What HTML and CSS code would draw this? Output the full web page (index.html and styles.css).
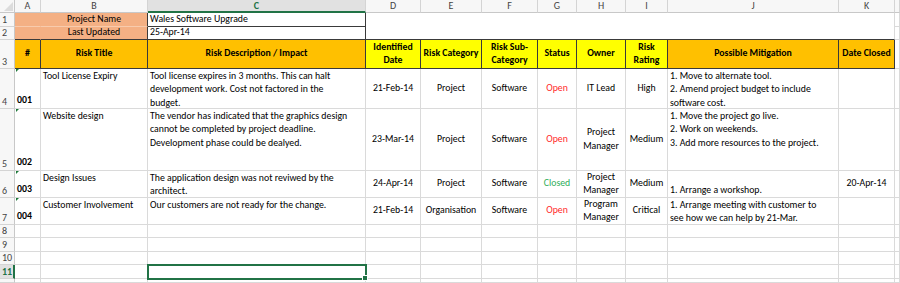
FILE: index.html
```html
<!DOCTYPE html>
<html>
<head>
<meta charset="utf-8">
<link rel="stylesheet" href="styles.css">
</head>
<body>
<div class="sheet">
  <!-- column headers -->
  <div class="corner"><span class="tri"></span></div>
  <div class="ch">A</div><div class="ch">B</div><div class="ch sel">C</div><div class="ch">D</div><div class="ch">E</div><div class="ch">F</div><div class="ch">G</div><div class="ch">H</div><div class="ch">I</div><div class="ch">J</div><div class="ch">K</div><div class="ch"></div>

  <!-- row 1 -->
  <div class="rh">1</div>
  <div class="c salmon sa"></div>
  <div class="c salmon sb mid ctr">Project Name</div>
  <div class="c boxc mid">Wales Software Upgrade</div>
  <div class="c merged"></div>
  <div class="c"></div>

  <!-- row 2 -->
  <div class="rh">2</div>
  <div class="c salmon sa s2"></div>
  <div class="c salmon sb s2 mid ctr">Last Updated</div>
  <div class="c boxc mid">25-Apr-14</div>
  <div class="c"></div>

  <!-- row 3 -->
  <div class="rh">3</div>
  <div class="c hd orange mid ctr">#</div>
  <div class="c hd orange mid ctr">Risk Title</div>
  <div class="c hd orange mid ctr">Risk Description / Impact</div>
  <div class="c hd yellow mid ctr">Identified<br>Date</div>
  <div class="c hd yellow mid ctr">Risk Category</div>
  <div class="c hd yellow mid ctr">Risk Sub-<br>Category</div>
  <div class="c hd yellow mid ctr">Status</div>
  <div class="c hd yellow mid ctr">Owner</div>
  <div class="c hd yellow mid ctr">Risk<br>Rating</div>
  <div class="c hd orange mid ctr">Possible Mitigation</div>
  <div class="c hd orange mid ctr">Date Closed</div>
  <div class="c"></div>

  <!-- row 4 -->
  <div class="rh">4</div>
  <div class="c id bot">001</div>
  <div class="c top">Tool License Expiry</div>
  <div class="c top">Tool license expires in 3 months. This can halt<br>development work. Cost not factored in the<br>budget.</div>
  <div class="c mid ctr">21-Feb-14</div>
  <div class="c mid ctr">Project</div>
  <div class="c mid ctr">Software</div>
  <div class="c mid ctr open">Open</div>
  <div class="c mid ctr">IT Lead</div>
  <div class="c mid ctr">High</div>
  <div class="c top">1. Move to alternate tool.<br>2. Amend project budget to include<br>software cost.</div>
  <div class="c"></div>
  <div class="c"></div>

  <!-- row 5 -->
  <div class="rh">5</div>
  <div class="c id bot">002</div>
  <div class="c top">Website design</div>
  <div class="c top">The vendor has indicated that the graphics design<br>cannot be completed by project deadline.<br>Development phase could be dealyed.</div>
  <div class="c mid ctr">23-Mar-14</div>
  <div class="c mid ctr">Project</div>
  <div class="c mid ctr">Software</div>
  <div class="c mid ctr open">Open</div>
  <div class="c mid ctr">Project<br>Manager</div>
  <div class="c mid ctr">Medium</div>
  <div class="c top">1. Move the project go live.<br>2. Work on weekends.<br>3. Add more resources to the project.</div>
  <div class="c"></div>
  <div class="c"></div>

  <!-- row 6 -->
  <div class="rh">6</div>
  <div class="c id bot">003</div>
  <div class="c top">Design Issues</div>
  <div class="c top">The application design was not reviwed by the<br>architect.</div>
  <div class="c mid ctr">24-Apr-14</div>
  <div class="c mid ctr">Project</div>
  <div class="c mid ctr">Software</div>
  <div class="c mid ctr closed">Closed</div>
  <div class="c mid ctr">Project<br>Manager</div>
  <div class="c mid ctr">Medium</div>
  <div class="c bot">1. Arrange a workshop.</div>
  <div class="c mid ctr">20-Apr-14</div>
  <div class="c"></div>

  <!-- row 7 -->
  <div class="rh">7</div>
  <div class="c id bot">004</div>
  <div class="c top">Customer Involvement</div>
  <div class="c top">Our customers are not ready for the change.</div>
  <div class="c mid ctr">21-Feb-14</div>
  <div class="c mid ctr">Organisation</div>
  <div class="c mid ctr">Software</div>
  <div class="c mid ctr open">Open</div>
  <div class="c mid ctr">Program<br>Manager</div>
  <div class="c mid ctr">Critical</div>
  <div class="c top">1. Arrange meeting with customer to<br>see how we can help by 21-Mar.</div>
  <div class="c"></div>
  <div class="c"></div>

  <!-- row 8 -->
  <div class="rh">8</div>
  <div class="c"></div><div class="c"></div><div class="c"></div><div class="c"></div><div class="c"></div><div class="c"></div><div class="c"></div><div class="c"></div><div class="c"></div><div class="c"></div><div class="c"></div><div class="c"></div>
  <!-- row 9 -->
  <div class="rh">9</div>
  <div class="c"></div><div class="c"></div><div class="c"></div><div class="c"></div><div class="c"></div><div class="c"></div><div class="c"></div><div class="c"></div><div class="c"></div><div class="c"></div><div class="c"></div><div class="c"></div>
  <!-- row 10 -->
  <div class="rh">10</div>
  <div class="c"></div><div class="c"></div><div class="c"></div><div class="c"></div><div class="c"></div><div class="c"></div><div class="c"></div><div class="c"></div><div class="c"></div><div class="c"></div><div class="c"></div><div class="c"></div>
  <!-- row 11 -->
  <div class="rh rsel">11</div>
  <div class="c"></div><div class="c"></div><div class="c active"></div><div class="c"></div><div class="c"></div><div class="c"></div><div class="c"></div><div class="c"></div><div class="c"></div><div class="c"></div><div class="c"></div><div class="c"></div>
  <!-- row 12 -->
  <div class="rh"></div>
  <div class="c"></div><div class="c"></div><div class="c"></div><div class="c"></div><div class="c"></div><div class="c"></div><div class="c"></div><div class="c"></div><div class="c"></div><div class="c"></div><div class="c"></div><div class="c"></div>
</div>
</body>
</html>
```

FILE: styles.css
```css
html, body {
  margin: 0;
  padding: 0;
  background: #ffffff;
}

.sheet {
  display: grid;
  grid-template-columns: 15px 26px 107px 218px 55px 61px 56px 39px 49px 42px 171px 56px 5px;
  grid-template-rows: 13px 14px 13px 29px 40px 62px 27px 27px 13px 14px 13px 14px 4px;
  width: 900px;
  height: 283px;
  overflow: hidden;
  font-family: "Carlito", "Lato", "Liberation Sans", sans-serif;
  font-size: 9.8px;
  color: #000;
  line-height: 13.4px;
}

.corner {
  position: relative;
  background: #f7f7f7;
  border-right: 1px solid #c8c8c8;
  border-bottom: 1px solid #c8c8c8;
  box-sizing: border-box;
}
.corner .tri {
  position: absolute;
  right: 1px;
  bottom: 1px;
  width: 0;
  height: 0;
  border-left: 9px solid transparent;
  border-bottom: 9px solid #dcdcdc;
}

.ch {
  background: #f7f7f7;
  color: #444;
  font-size: 10px;
  line-height: 12px;
  text-align: center;
  border-right: 1px solid #d4d4d4;
  border-bottom: 1px solid #c8c8c8;
  box-sizing: border-box;
}
.ch.sel {
  background: #e1e1e1;
  color: #217346;
  font-weight: bold;
  border-bottom: 2px solid #217346;
}

.rh {
  background: #f7f7f7;
  color: #444;
  font-size: 10px;
  line-height: 12px;
  display: flex;
  align-items: flex-end;
  justify-content: flex-start;
  padding-left: 2px;
  border-right: 1px solid #c8c8c8;
  border-bottom: 1px solid #d4d4d4;
  box-sizing: border-box;
}
.rh.rsel {
  background: #e1e1e1;
  color: #217346;
  font-weight: bold;
  border-right: 2px solid #217346;
}

.c {
  box-sizing: border-box;
  border-right: 1px solid #dadada;
  border-bottom: 1px solid #dadada;
  padding: 0 2px;
  white-space: nowrap;
  display: flex;
  flex-direction: column;
  position: relative;
}
.top { justify-content: flex-start; padding-top: 1px; }
.mid { justify-content: center; }
.bot { justify-content: flex-end; }
.ctr { text-align: center; align-items: center; }

.salmon { background: #f4b084; }
.salmon.sa { border-right-color: #f4b084; border-bottom-color: #f8cbad; }
.salmon.sb { border-right-color: #3a3a3a; border-bottom-color: #f8cbad; }
.salmon.s2 { border-bottom-color: #3a3a3a; }

.boxc {
  border-right: 1px solid #3a3a3a;
  border-bottom: 1px solid #3a3a3a;
}
.merged {
  grid-column: 5 / 13;
  grid-row: 2 / 4;
  border-right-color: #dadada;
  border-bottom: 1px solid #3a3a3a;
}

.hd {
  font-weight: bold;
  border-right: 1px solid #3a3a3a;
  border-bottom: 1px solid #3a3a3a;
}
.orange { background: #ffc000; }
.yellow { background: #ffff00; }

.id {
  font-weight: bold;
  padding-bottom: 1px;
}
.id::before {
  content: "";
  position: absolute;
  left: 1px;
  top: 0;
  width: 0;
  height: 0;
  border-top: 3px solid #1e7a3a;
  border-right: 3px solid transparent;
}

.open { color: #ff2a2a; }
.closed { color: #2fae5a; }

.active {
  outline: 2px solid #217346;
  outline-offset: -1px;
  z-index: 2;
}
.active::after {
  content: "";
  position: absolute;
  right: -3px;
  bottom: -3px;
  width: 4px;
  height: 4px;
  background: #217346;
  border: 1px solid #ffffff;
}
```
